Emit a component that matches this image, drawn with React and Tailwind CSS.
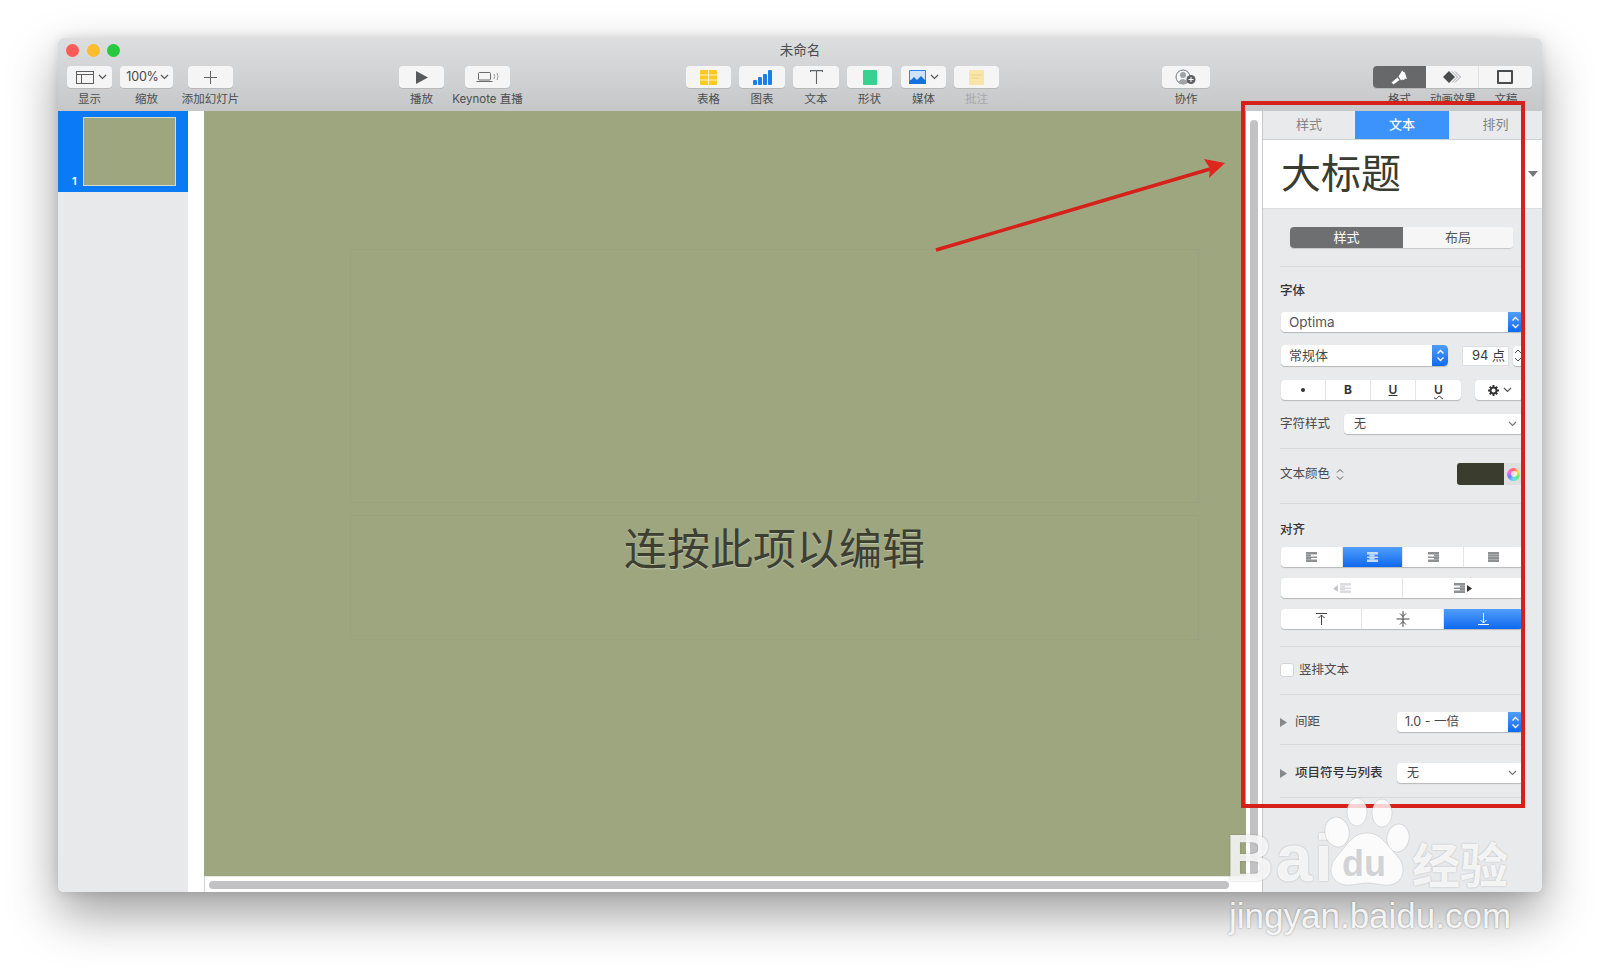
import React from "react";

const FONT = "[font-family:Inter,'Noto_Sans_CJK_SC',sans-serif]";

const Chev = ({ className = "", color = "#555" }) => (
  <svg width="9" height="6" viewBox="0 0 9 6" className={className} fill="none" stroke={color} strokeWidth="1.2">
    <path d="M1 1l3.5 3.5L8 1" />
  </svg>
);

const Stepper = ({ className = "w-[15px]" }) => (
  <div className={`${className} h-full flex items-center justify-center bg-gradient-to-b from-[#4f9dfb] to-[#0b69ef] shrink-0`}>
    <svg width="9" height="15" viewBox="0 0 9 15" fill="none" stroke="#fff" strokeWidth="1.4">
      <path d="M1.5 5.5L4.5 2.5l3 3M1.5 9.5l3 3 3-3" />
    </svg>
  </div>
);

const ToolBtn = ({ label, className, children, faded }) => (
  <div className={`flex flex-col items-center shrink-0 ${className}`}>
    <div className="w-full h-[22px] rounded-[4px] bg-[#f5f5f6] shadow-[0_1px_0_rgba(0,0,0,0.1)] flex items-center justify-center gap-[4px]">
      {children}
    </div>
    <div className={`mt-[3px] text-[11.5px] leading-[16px] whitespace-nowrap ${faded ? "text-[#a6a7a9]" : "text-[#4d4e50]"}`}>{label}</div>
  </div>
);

const Toolbar = () => (
  <div className="flex items-start h-[45px]">
    <ToolBtn label="显示" className="ml-[9px] w-[45px]">
      <svg width="18" height="13" viewBox="0 0 18 13" fill="none" stroke="#5c5d5f" strokeWidth="1" className="ml-[3px]"><rect x="0.5" y="0.5" width="17" height="12" /><path d="M0.5 3.5h17M5.5 3.5v9" /></svg>
      <Chev />
    </ToolBtn>
    <ToolBtn label="缩放" className="ml-[8px] w-[53px]">
      <span className="text-[12.5px] text-[#454648] tracking-[-0.2px] pl-[2px]">100%</span>
      <Chev className="-ml-[3px]" />
    </ToolBtn>
    <ToolBtn label="添加幻灯片" className="ml-[15px] w-[45px]">
      <svg width="13" height="13" viewBox="0 0 13 13" stroke="#626365" strokeWidth="1"><path d="M6.5 0v13M0 6.5h13" /></svg>
    </ToolBtn>
    <ToolBtn label="播放" className="ml-[166px] w-[45px]">
      <svg width="12" height="13" viewBox="0 0 12 13" fill="#58595b"><path d="M0 0l12 6.5L0 13z" /></svg>
    </ToolBtn>
    <ToolBtn label="Keynote 直播" className="ml-[21px] w-[45px]">
      <svg width="24" height="12" viewBox="0 0 24 12" fill="none" stroke="#6a6b6d" strokeWidth="1"><rect x="2.5" y="1.5" width="12" height="7.5" rx="1" /><path d="M0.5 10.5h16" /><path d="M18 3q1.5 2.5 0 5M21 2q2 3.500 0 7" stroke="#9a9b9d" /></svg>
    </ToolBtn>
    <ToolBtn label="表格" className="ml-[176px] w-[45px]">
      <svg width="17" height="15" viewBox="0 0 17 15"><rect width="17" height="15" rx="1" fill="#fbc91f" /><path d="M0 5h17M0 10h17M8.500 0v15" stroke="#fff" strokeWidth="0.8" /></svg>
    </ToolBtn>
    <ToolBtn label="图表" className="ml-[8px] w-[46px]">
      <svg width="19" height="15" viewBox="0 0 19 15" fill="#1b7fe9"><rect y="10" width="4" height="5" rx="1" /><rect x="5" y="7" width="4" height="8" rx="1" /><rect x="10" y="4" width="4" height="11" rx="1" /><rect x="15" y="0" width="4" height="15" rx="1" /></svg>
    </ToolBtn>
    <ToolBtn label="文本" className="ml-[8px] w-[46px]">
      <svg width="13" height="14" viewBox="0 0 13 14" fill="none" stroke="#636466" strokeWidth="1.1"><path d="M0.5 2V0.6h12V2M6.500 0.600V14" /></svg>
    </ToolBtn>
    <ToolBtn label="形状" className="ml-[8px] w-[45px]">
      <div className="w-[14px] h-[15px] rounded-[1px] bg-[#37d28f]" />
    </ToolBtn>
    <ToolBtn label="媒体" className="ml-[9px] w-[45px]">
      <svg width="17" height="14" viewBox="0 0 17 14"><rect width="17" height="14" rx="1" fill="#2a86ea" /><rect x="1" y="1" width="15" height="9" fill="#cfe4fb" /><path d="M0 12l5-5 3 3 4-4 5 5v3H0z" fill="#1570dd" /></svg>
      <Chev />
    </ToolBtn>
    <ToolBtn label="批注" faded className="ml-[8px] w-[45px]">
      <svg width="15" height="15" viewBox="0 0 15 15"><rect width="15" height="15" fill="#f8e5a9" /><path d="M2 5h11M2 8h8" stroke="#eed48a" strokeWidth="1" /></svg>
    </ToolBtn>
    <ToolBtn label="协作" className="ml-[163px] w-[48px]">
      <svg width="22" height="16" viewBox="0 0 22 16" fill="none"><circle cx="8" cy="8" r="7" stroke="#77787a" /><circle cx="8" cy="6" r="3" fill="#a2a3a5" /><path d="M3 13q5-6 10 0l-2 2H5z" fill="#a2a3a5" /><circle cx="16" cy="10.500" r="4.500" fill="#5f6062" /><path d="M13.500 10.500h5M16 8v5" stroke="#fff" /></svg>
    </ToolBtn>
    <div className="ml-[163px] w-[159px] flex flex-col shrink-0">
      <div className="h-[22px] rounded-[4px] bg-[#f5f5f6] shadow-[0_1px_0_rgba(0,0,0,0.1)] flex overflow-hidden">
        <div className="w-[53px] bg-[#66686a] flex items-center justify-center">
          <svg width="17" height="15" viewBox="0 0 17 15" fill="#fff"><path d="M0.500 12.500L6.500 7.500l2 2.500-6 4.500zM7.500 6.500L10 2.500l1-2 1.500 1.500 1.500.5.500 2 1.500 4.500-2-.5-1 1.500-2-.5-.8 1z" /></svg>
        </div>
        <div className="w-[53px] border-r border-[#e2e2e3] flex items-center justify-center">
          <svg width="18" height="12" viewBox="0 0 18 12"><path d="M6 0l6 6-6 6-6-6z" fill="#4a4b4d" /><path d="M9 0.500L14.500 6 9 11.500M12 0.500L17.500 6 12 11.500" fill="none" stroke="#a5a6a8" /></svg>
        </div>
        <div className="flex-1 flex items-center justify-center pr-[2px]">
          <div className="w-[16px] h-[14px] border-2 border-[#4a4b4d] rounded-[1px]" />
        </div>
      </div>
      <div className="flex mt-[3px] text-[11.5px] leading-[16px] text-[#4d4e50] text-center whitespace-nowrap">
        <span className="w-[53px]">格式</span><span className="w-[54px]">动画效果</span><span className="w-[52px]">文稿</span>
      </div>
    </div>
  </div>
);

const Divider = ({ className }) => <div className={`h-px bg-[#d8d9db] ${className}`} />;

const Field = ({ className = "", children }) => (
  <div className={`h-[20px] bg-white rounded-[4px] shadow-[0_1px_1px_rgba(0,0,0,0.22)] flex items-center overflow-hidden text-[12.5px] text-[#47484a] ${className}`}>{children}</div>
);

const Seg = ({ className = "", children }) => (
  <div className={`flex items-center justify-center h-full border-r border-[#e4e4e5] last:border-r-0 ${className}`}>{children}</div>
);

// Paragraph-alignment glyph: full rows alternating with short rows, thick like the reference
const AlignGlyph = ({ color = "#8f9092", short }) => {
  const x = short === "left" ? 0 : short === "right" ? 6 : short === "center" ? 2.5 : 0;
  const w = short ? 5 : 11;
  return (
    <svg width="11" height="10" viewBox="0 0 11 10" fill={color}>
      <rect y="0" width="11" height="2.500" />
      <rect x={x} y="2.500" width={w} height="2" />
      <rect y="4.500" width="11" height="1.500" />
      <rect x={x} y="6" width={w} height="1.500" />
      <rect y="7.500" width="11" height="2.500" />
    </svg>
  );
};

const Inspector = () => (
  <div className="w-[279px] shrink-0 bg-[#e9eaec] flex flex-col">
    <div className="h-[29px] flex text-[13px] text-[#838486] border-b border-[#d0d1d3] shrink-0">
      <div className="w-[92px] flex items-center justify-center">样式</div>
      <div className="w-[94px] flex items-center justify-center bg-[#3b93fb] text-white font-medium">文本</div>
      <div className="flex-1 flex items-center justify-center">排列</div>
    </div>
    <div className="h-[69px] bg-white border-b border-[#dcdddf] flex items-center justify-between pl-[18px] pr-[4px] shrink-0">
      <span className="text-[40px] leading-none text-[#3a3c30]">大标题</span>
      <svg width="10" height="6" viewBox="0 0 10 6" fill="#77787a"><path d="M0 0h10L5 6z" /></svg>
    </div>
    <div className="pl-[17px] pr-[19px] flex flex-col">
      <div className="mt-[18px] ml-[10px] w-[223px] h-[21px] flex rounded-[4px] overflow-hidden bg-white shadow-[0_1px_1px_rgba(0,0,0,0.15)] text-[13px]">
        <div className="w-[113px] bg-[#6d6f71] text-white flex items-center justify-center">样式</div>
        <div className="flex-1 text-[#55565a] flex items-center justify-center bg-[#f6f6f7]">布局</div>
      </div>
      <Divider className="mt-[18px]" />
      <div className="mt-[16px] h-[16px] flex items-center text-[12.5px] font-medium text-[#333436]">字体</div>

      <Field className="mt-[13px] ml-px pl-[8px] justify-between">
        <span className="text-[13.5px] text-[#55565a]">Optima</span>
        <Stepper />
      </Field>

      <div className="mt-[13px] ml-px flex items-center h-[21px]">
        <Field className="w-[167px] !h-[21px] pl-[8px] justify-between">
          <span className="text-[13px]">常规体</span>
          <Stepper className="w-[16px] rounded-r-[4px]" />
        </Field>
        <div className="ml-[14px] w-[47px] h-[20px] bg-white border border-[#dddee0] flex items-center justify-end pr-[3px] text-[13px] text-[#37383a]">94 点</div>
        <div className="ml-[4px] w-[10px] h-[20px] rounded-l-[4px] bg-white shadow-[0_1px_1px_rgba(0,0,0,0.22)] flex items-center justify-center">
          <svg width="8" height="15" viewBox="0 0 8 15" fill="none" stroke="#555" strokeWidth="1"><path d="M1 5l3-3 3 3M1 10l3 3 3-3" /></svg>
        </div>
      </div>

      <div className="mt-[14px] ml-px flex h-[20px]">
        <Field className="w-[180px]">
          <Seg className="w-[45px]"><span className="w-[4px] h-[4px] rounded-full bg-[#333]" /></Seg>
          <Seg className="w-[45px]"><span className="font-bold text-[12px] text-[#333]">B</span></Seg>
          <Seg className="w-[45px]"><span className="underline font-semibold text-[12px] text-[#333]">U</span></Seg>
          <Seg className="w-[45px]"><span className="underline decoration-wavy decoration-1 font-semibold text-[12px] text-[#333]">U</span></Seg>
        </Field>
        <Field className="ml-[14px] flex-1 justify-center gap-[3px]">
          <svg width="13" height="13" viewBox="0 0 24 24" fill="none" stroke="#333" strokeWidth="3.500"><circle cx="12" cy="12" r="5.500" /><path d="M12 2v4M12 18v4M2 12h4M18 12h4M5 5l3 3M16 16l3 3M19 5l-3 3M8 16l-3 3" /></svg>
          <Chev />
        </Field>
      </div>

      <div className="mt-[14px] flex items-center h-[20px]">
        <span className="w-[64px] text-[12.5px] text-[#4a4b4d] shrink-0">字符样式</span>
        <Field className="flex-1 pl-[10px] pr-[6px] justify-between">
          <span className="text-[12px]">无</span><Chev color="#777" />
        </Field>
      </div>
      <Divider className="mt-[14px]" />

      <div className="mt-[14px] flex items-center justify-between h-[22px]">
        <span className="flex items-center gap-[6px] text-[12.5px] text-[#4a4b4d]">
          文本颜色
          <svg width="8" height="13" viewBox="0 0 8 13" fill="none" stroke="#555" strokeWidth="1"><path d="M1 4.500l3-3 3 3M1 8.500l3 3 3-3" /></svg>
        </span>
        <div className="flex items-center h-full">
          <div className="w-[47px] h-[22px] rounded-l-[3px] bg-[#3a3d2e]" />
          <div className="w-[19px] h-[22px] bg-[#dedfe0] flex items-center justify-center rounded-r-[3px]">
            <div className="w-[13px] h-[13px] rounded-full bg-[conic-gradient(#f66,#fd6,#6e6,#6de,#77f,#f6d,#f66)] flex items-center justify-center">
              <div className="w-[6px] h-[6px] rounded-full bg-white/70" />
            </div>
          </div>
        </div>
      </div>
      <Divider className="mt-[18px]" />

      <div className="mt-[18px] h-[16px] flex items-center text-[12.5px] font-medium text-[#333436]">对齐</div>

      <Field className="mt-[9px] ml-px">
        <Seg className="w-[62px]"><AlignGlyph short="left" /></Seg>
        <Seg className="w-[60px] bg-gradient-to-b from-[#4f9dfb] to-[#0b69ef]"><AlignGlyph color="#c5dcfc" short="center" /></Seg>
        <Seg className="w-[61px]"><AlignGlyph short="right" /></Seg>
        <Seg className="flex-1"><AlignGlyph /></Seg>
      </Field>

      <Field className="mt-[11px] ml-px">
        <Seg className="w-[122px] gap-[2px]">
          <svg width="5" height="7" viewBox="0 0 5 7" fill="#c5c6c8"><path d="M5 0v7L0 3.500z" /></svg>
          <AlignGlyph color="#dcdcde" short="left" />
        </Seg>
        <Seg className="flex-1 gap-[2px]">
          <AlignGlyph short="right" />
          <svg width="5" height="7" viewBox="0 0 5 7" fill="#333"><path d="M0 0v7l5-3.500z" /></svg>
        </Seg>
      </Field>

      <Field className="mt-[11px] ml-px">
        <Seg className="w-[81px]">
          <svg width="13" height="12" viewBox="0 0 13 12" fill="none" stroke="#444" strokeWidth="1"><path d="M1 0.500h11M6.500 12V2M3.500 5l3-3 3 3" /></svg>
        </Seg>
        <Seg className="w-[82px]">
          <svg width="14" height="16" viewBox="0 0 14 16" fill="none" stroke="#444" strokeWidth="1"><path d="M0.500 8h13M7 0v16M4 2.500L7 5.500l3-3M4 13.500L7 10.500l3 3" /></svg>
        </Seg>
        <Seg className="flex-1 bg-gradient-to-b from-[#4f9dfb] to-[#0b69ef]">
          <svg width="13" height="12" viewBox="0 0 13 12" fill="none" stroke="#fff" strokeWidth="1"><path d="M1 11.500h11M6.500 0v10M3.500 7l3 3 3-3" /></svg>
        </Seg>
      </Field>
      <Divider className="mt-[17px]" />

      <div className="mt-[16px] h-[14px] flex items-center gap-[5px] text-[12.5px] text-[#4a4b4d]">
        <div className="w-[14px] h-[14px] rounded-[3px] bg-white border border-[#d4d5d7]" />
        <span>竖排文本</span>
      </div>
      <Divider className="mt-[17px]" />

      <div className="mt-[17px] flex items-center h-[20px]">
        <svg width="7" height="9" viewBox="0 0 7 9" fill="#87888a" className="shrink-0"><path d="M0 0l7 4.500L0 9z" /></svg>
        <span className="ml-[8px] text-[12.5px] text-[#4a4b4d] w-[102px] shrink-0">间距</span>
        <Field className="flex-1 pl-[8px] justify-between">
          <span className="text-[12.5px]">1.0 - 一倍</span>
          <Stepper />
        </Field>
      </div>
      <Divider className="mt-[12px]" />

      <div className="mt-[18px] flex items-center h-[20px]">
        <svg width="7" height="9" viewBox="0 0 7 9" fill="#87888a" className="shrink-0"><path d="M0 0l7 4.500L0 9z" /></svg>
        <span className="ml-[8px] text-[12.5px] font-medium text-[#333436] w-[102px] shrink-0 whitespace-nowrap">项目符号与列表</span>
        <Field className="flex-1 pl-[10px] pr-[6px] justify-between">
          <span className="text-[12px]">无</span><Chev color="#777" />
        </Field>
      </div>
      <Divider className="mt-[14px]" />
    </div>
  </div>
);

const Watermark = () => (
  <>
    <div className="absolute left-[1226px] top-[820px] text-[66px] leading-[76px] tracking-[2px] font-bold text-white/85 [font-family:'Liberation_Sans',sans-serif] [text-shadow:0_0_2px_rgba(0,0,0,0.25)]">Bai</div>
    <svg className="absolute left-[1320px] top-[795px]" width="90" height="95" viewBox="0 0 90 95" fill="#fff" fillOpacity="0.8" stroke="#000" strokeOpacity="0.1">
      <ellipse cx="37" cy="17" rx="10" ry="14" />
      <ellipse cx="62" cy="18" rx="10" ry="14" />
      <ellipse cx="17" cy="37" rx="12" ry="15" transform="rotate(-10 17 37)" />
      <ellipse cx="78" cy="43" rx="11" ry="14" transform="rotate(10 78 43)" />
      <path d="M47 38c12 0 17 8 24 16 7 8 12 12 12 21 0 11-9 16-19 15-7-.6-11-2-17-2s-10 1.500-17 2C20 91 11 85 11 75c0-9 7-14 13-22 6-8 12-15 23-15z" />
    </svg>
    <div className="absolute left-[1342px] top-[842px] text-[36px] leading-[44px] font-bold text-[#d2d3d6] [font-family:'Liberation_Sans',sans-serif]">du</div>
    <div className="absolute left-[1412px] top-[834px] text-[48px] leading-[56px] font-bold text-white/85 [font-family:'Noto_Sans_CJK_SC',sans-serif] [text-shadow:0_0_2px_rgba(0,0,0,0.25)]">经验</div>
    <div className="absolute left-[1229px] top-[896px] text-[35px] leading-[40px] text-white/90 [font-family:'Liberation_Sans',sans-serif] [text-shadow:0_0_2px_rgba(0,0,0,0.4)]">jingyan.baidu.com</div>
  </>
);

export default function App() {
  return (
    <div className={`relative w-[1600px] h-[968px] overflow-hidden bg-white pl-[58px] pt-[38px] ${FONT}`}>
      <div className="w-[1484px] h-[854px] rounded-[6px] overflow-hidden flex flex-col shadow-[0_22px_50px_rgba(0,0,0,0.38),0_0_12px_rgba(0,0,0,0.12)]">
        <div className="h-[73px] shrink-0 bg-gradient-to-b from-[#dcdedf] to-[#c5c7c8]">
          <div className="h-[28px] grid grid-cols-[1fr_auto_1fr] items-center">
            <div className="flex items-center gap-[7.500px] pl-[8px] pb-[3px]">
              <span className="w-[13px] h-[13px] rounded-full bg-[#fc5b57]" />
              <span className="w-[13px] h-[13px] rounded-full bg-[#fdbc2e]" />
              <span className="w-[13px] h-[13px] rounded-full bg-[#27c93f]" />
            </div>
            <div className="text-[13.500px] text-[#4c4d4f] pb-[4px]">未命名</div>
            <div />
          </div>
          <Toolbar />
        </div>
        <div className="flex flex-1 min-h-0">
          <div className="w-[130px] shrink-0 bg-[#e8e9eb]">
            <div className="h-[81px] bg-[#0a7bf5] relative flex pl-[25px] pt-[6px]">
              <span className="absolute left-[14px] bottom-[3px] text-[11px] font-semibold text-white">1</span>
              <div className="w-[93px] h-[69px] bg-[#9ea680] border border-[#d4dccb]" />
            </div>
          </div>
          <div className="w-[16px] shrink-0 bg-white" />
          <div className="flex-1 min-w-0 flex flex-col">
            <div className="flex flex-1 min-h-0">
              <div className="flex-1 bg-[#9ea680] pl-[146px] pt-[138px] flex flex-col gap-[12px]">
                <div className="w-[849px] h-[254px] border border-black/[0.025]" />
                <div className="w-[849px] h-[125px] border border-black/[0.025] flex justify-center pt-[3px]">
                  <span className="text-[43px] leading-[60px] text-[#3c3f32] [text-shadow:0_1px_1px_rgba(255,255,255,0.35)]">连按此项以编辑</span>
                </div>
              </div>
              <div className="w-[17px] shrink-0 bg-white border-r border-[#c6c7c9] pl-[4px] pt-[9px]">
                <div className="w-[8px] h-[756px] rounded-full bg-[#c2c2c4]" />
              </div>
            </div>
            <div className="h-[16px] shrink-0 bg-white border-t border-[#e6e6e6] border-l-[#d4d5d7] border-l border-r-[#c6c7c9] border-r pl-[4px] pt-[4px]">
              <div className="w-[1020px] h-[8px] rounded-full bg-[#c2c2c4]" />
            </div>
          </div>
          <Inspector />
        </div>
      </div>

      {/* annotation */}
      <div className="absolute left-[1241px] top-[101px] w-[284px] h-[707px] border-[4px] border-[#d6211a]" />
      <svg className="absolute left-[930px] top-[155px]" width="300" height="105" viewBox="0 0 300 105">
        <path d="M6 95L280 14" stroke="#d6211a" strokeWidth="3.500" />
        <path d="M295 8L274 4l6 9.500-1 9.500z" fill="#e0261c" />
      </svg>
      <Watermark />
    </div>
  );
}
